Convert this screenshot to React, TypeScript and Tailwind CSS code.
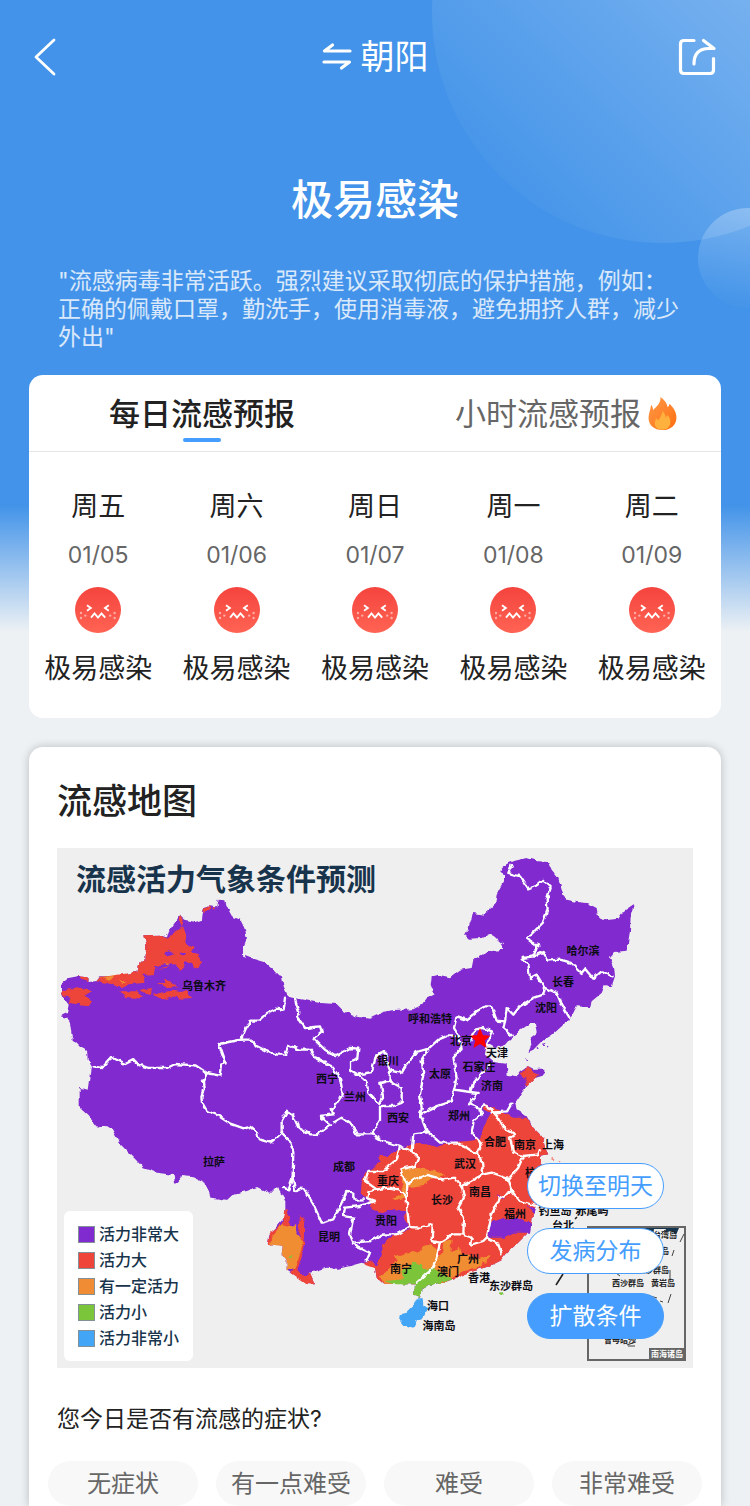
import { useState } from "react";

const days = [
  { name: "周五", date: "01/05", level: "极易感染" },
  { name: "周六", date: "01/06", level: "极易感染" },
  { name: "周日", date: "01/07", level: "极易感染" },
  { name: "周一", date: "01/08", level: "极易感染" },
  { name: "周二", date: "01/09", level: "极易感染" },
];

const symptoms = ["无症状", "有一点难受", "难受", "非常难受"];

const legend = [
  { label: "活力非常大", swatch: "bg-[#802bcf]" },
  { label: "活力大", swatch: "bg-[#ee443a]" },
  { label: "有一定活力", swatch: "bg-[#f08c33]" },
  { label: "活力小", swatch: "bg-[#7bc53b]" },
  { label: "活力非常小", swatch: "bg-[#42a5f5]" },
];

const cities: [string, number, number][] = [
  ["哈尔滨", 526, 103],
  ["长春", 506, 134],
  ["沈阳", 489, 160],
  ["乌鲁木齐", 147, 138],
  ["呼和浩特", 373, 171],
  ["北京", 404, 193],
  ["天津", 440, 205],
  ["银川", 331, 213],
  ["石家庄", 422, 219],
  ["太原", 383, 226],
  ["西宁", 270, 231],
  ["济南", 435, 238],
  ["兰州", 298, 249],
  ["西安", 341, 270],
  ["郑州", 402, 268],
  ["合肥", 438, 294],
  ["南京", 468, 297],
  ["上海", 496, 297],
  ["拉萨", 157, 314],
  ["成都", 287, 319],
  ["武汉", 408, 316],
  ["杭州", 479, 325],
  ["重庆", 331, 333],
  ["长沙", 385, 352],
  ["南昌", 423, 344],
  ["福州", 458, 366],
  ["贵阳", 329, 373],
  ["昆明", 272, 389],
  ["广州", 411, 411],
  ["南宁", 344, 421],
  ["澳门", 391, 424],
  ["香港", 422, 430],
  ["东沙群岛", 454, 438],
  ["海口", 381, 458],
  ["海南岛", 382, 478],
  ["钓鱼岛", 498, 363],
  ["赤尾屿", 535, 363],
  ["台北", 506, 378],
];

const islands: [string, number, number][] = [
  ["台湾岛", 608, 387],
  ["澎湖岛", 600, 403],
  ["东沙群岛", 596, 422],
  ["西沙群岛", 571, 435],
  ["黄岩岛", 606, 435],
  ["曾母暗沙", 563, 492],
];

const land =
  "M12 408 35 390 62 385 92 388 92 402 118 400 130 385 170 385 205 378 238 372 245 345 265 335 268 290 262 262 308 260 330 268 335 250 360 215 368 200 385 215 415 222 435 215 440 180 455 175 478 178 482 155 505 157 510 178 525 205 550 215 562 240 570 270 558 300 558 322 580 330 620 342 645 362 664 382 675 385 680 415 694 447 739 455 789 465 839 468 859 488 894 505 937 512 979 492 1009 486 1069 484 1094 470 1114 445 1131 435 1121 410 1124 385 1144 380 1179 388 1209 365 1244 360 1249 335 1279 318 1300 310 1339 305 1337 288 1314 268 1297 258 1274 270 1236 272 1224 262 1234 240 1249 195 1279 200 1289 192 1314 170 1319 140 1341 100 1341 78 1326 70 1349 48 1374 38 1409 30 1444 40 1474 42 1484 65 1504 90 1514 125 1527 155 1559 162 1589 165 1619 180 1624 210 1644 217 1684 212 1699 190 1731 168 1721 200 1719 250 1709 308 1674 312 1659 330 1671 355 1674 385 1664 415 1644 412 1634 435 1604 460 1599 478 1559 475 1544 505 1509 540 1484 562 1454 580 1429 605 1414 612 1424 590 1417 572 1439 555 1434 525 1419 525 1389 545 1379 560 1359 572 1344 590 1314 600 1289 585 1284 620 1309 642 1349 648 1352 680 1379 685 1389 672 1414 655 1429 662 1462 662 1462 682 1434 690 1409 715 1394 735 1374 765 1379 784 1409 805 1429 839 1459 869 1464 899 1474 919 1449 924 1449 944 1464 960 1470 1000 1450 1050 1429 1089 1424 1129 1409 1159 1379 1189 1349 1214 1329 1239 1299 1254 1249 1269 1219 1274 1199 1289 1159 1304 1114 1311 1094 1324 1089 1349 1071 1344 1074 1309 1039 1309 1009 1304 979 1307 959 1289 954 1259 929 1249 914 1244 879 1254 844 1262 809 1259 759 1274 774 1309 754 1309 729 1294 689 1267 689 1239 674 1219 677 1194 649 1189 632 1191 637 1159 655 1140 685 1105 685 1060 660 1017 640 1037 600 1017 570 1029 530 1037 510 1056 462 1049 445 1004 410 988 375 984 355 1011 350 981 300 974 260 961 235 934 210 909 190 889 165 844 145 831 122 839 95 804 68 779 68 720 95 725 100 690 105 657 92 635 90 605 70 595 45 570 40 530 30 510 10 505 30 495 35 470 20 450 12 430Z";

const redAreas = [
  "M262 262 308 260 330 270 350 255 375 235 365 215 368 200 380 215 375 235 388 260 385 285 410 300 400 310 430 325 435 345 420 365 405 345 385 340 380 360 370 368 355 345 330 360 295 362 290 378 260 380 262 405 220 408 195 420 150 405 118 400 130 387 238 373 245 345 265 335 268 290Z",
  "M12 430 60 418 85 422 105 430 85 440 103 462 98 472 60 468 35 465 40 450 20 445Z",
  "M62 385 92 388 90 402 75 395ZM190 430 240 430 260 445 235 452 205 450ZM250 425 285 420 282 440 265 438Z",
  "M300 405 325 405 322 392 345 405 362 418 330 420ZM290 440 320 432 345 428 375 432 390 425 405 450 365 452 360 440 335 452 310 450ZM440 182 455 175 462 182 440 195ZM470 178 478 180 470 186Z",
  "M1014 909 1039 899 1069 887 1109 889 1139 897 1169 887 1199 881 1239 879 1269 874 1279 839 1289 820 1304 794 1280 785 1284 769 1319 784 1369 809 1409 809 1429 839 1459 869 1464 899 1474 919 1449 924 1449 944 1464 960 1470 1000 1450 1050 1429 1089 1424 1129 1409 1159 1379 1189 1349 1214 1329 1239 1299 1254 1249 1269 1199 1289 1159 1304 1074 1309 979 1307 959 1289 954 1259 969 1229 979 1189 999 1169 1059 1144 1044 1129 999 1104 944 1084 939 1054 911 1039 914 1004 924 974 949 959 969 939 964 924 994 925Z",
  "M639 1154 674 1129 687 1084 697 1109 699 1134 675 1150 640 1192 632 1191ZM729 1104 744 1119 744 1169 734 1229 724 1269 739 1284 759 1274 774 1309 749 1309 700 1275 715 1255 719 1219 734 1179 724 1144ZM920 1244 950 1240 960 1262 930 1252Z",
  "M1387 680 1414 655 1429 672 1447 680 1429 695 1411 715 1404 690Z",
];

const purpleHoles =
  "M320 318 335 305 350 320 335 325ZM365 312 385 318 378 326ZM290 355 350 345 352 352 300 362ZM1299 1124 1329 1114 1379 1109 1399 1119 1424 1124 1419 1154 1369 1154 1339 1169 1294 1169ZM1319 1039 1344 1049 1329 1054ZM1409 1074 1434 1080 1430 1095ZM955 1105 1000 1085 1050 1090 1040 1105 1055 1140 990 1130Z";

const orangeAreas =
  "M118 388 175 383 160 395 140 388ZM185 393 205 405 195 405ZM322 346 340 348 330 351ZM1029 964 1069 959 1109 964 1169 979 1119 994 1099 1014 1054 1021 1044 1049 1014 1056 1004 1049 1039 1039 1034 989ZM984 1274 1019 1239 1010 1225 1034 1219 1069 1209 1085 1215 1099 1194 1119 1189 1139 1204 1144 1229 1155 1215 1160 1179 1184 1175 1180 1209 1209 1199 1215 1220 1239 1224 1279 1239 1269 1259 1219 1269 1159 1304 979 1307 969 1284ZM649 1159 674 1129 699 1134 714 1129 719 1154 739 1179 729 1219 714 1264 689 1267 689 1239 674 1219 677 1194 639 1189ZM1270 1228 1300 1220 1290 1245 1270 1240Z";

const greenAreas =
  "M984 1299 1039 1294 1034 1269 1069 1244 1094 1249 1099 1264 1129 1259 1169 1284 1189 1294 1139 1307 1114 1311 1094 1324 1089 1349 1071 1344 1074 1309 1009 1309ZM697 1225 706 1225 704 1230Z";

const hainan = "M1079 1351 1097 1351 1099 1371 1114 1381 1094 1414 1079 1419 1069 1439 1039 1431 1029 1419 1031 1399 1049 1394 1069 1374Z";

const borders = [
  "M110 655 132 660 162 627 205 648 230 635 245 650 275 660 330 660 355 648 415 652 450 675 488 683 492 650 506 645 490 600 485 588 552 575 565 545 580 518 605 518 630 495 655 482 680 485 684 452",
  "M450 675 438 700 440 720 433 745 435 764 450 789 480 801 520 827 560 841 580 837 600 854 605 874 640 884 659 869 674 854",
  "M552 575 580 575 600 595 640 615 664 620 684 620 694 592 729 605 759 605 779 632 824 655 849 690 857 740 839 765 824 785 829 799 789 804 819 829 779 859 759 859 724 839 709 804 689 791 674 819 674 854 699 879 709 909 707 989 694 1024 678 1020",
  "M714 455 727 495 720 505 744 540 789 535 794 550 769 572 804 605 834 625 879 600 904 602 901 630 879 640 879 665 904 680 929 700 934 735 964 768 978 750 974 720 970 705 997 698 999 668",
  "M904 680 944 672 957 625 984 607 989 640 999 668 1034 675 1049 650 1079 612 1114 602 1144 575 1174 562 1204 562 1191 540 1199 505 1229 515 1259 490 1284 475 1304 475 1319 518 1344 520 1349 480 1369 500 1389 475 1429 450 1459 440 1464 420 1439 380 1419 390 1414 350 1397 330 1429 325 1441 295 1409 272 1457 225 1472 185 1469 155 1481 120 1457 98 1439 112 1414 122 1389 85 1354 75 1364 52",
  "M1429 325 1457 312 1474 338 1509 335 1544 345 1574 375 1584 362 1609 392 1634 370 1667 385",
  "M1435 300 1445 285 1447 295M1464 420 1499 435 1514 470 1537 508M1344 520 1339 540 1364 562",
  "M1114 602 1094 635 1099 680 1089 740 1094 780 1089 799 1109 849 1149 884 1199 884 1229 899 1259 919",
  "M1204 562 1214 600 1189 630 1199 690 1191 725 1184 760 1139 775 1094 797",
  "M1191 725 1239 732 1249 705 1279 670 1299 650M1239 732 1262 735 1236 769 1269 780 1275 799 1250 820 1244 854 1274 889 1259 919 1274 934 1279 979",
  "M997 698 1034 720 1034 765 1009 774 969 774 969 819 944 859 899 859 884 829 854 809 829 824",
  "M944 859 979 879 1029 894 1064 909 1069 859 1109 854",
  "M1029 894 1019 934 979 969 934 969 924 999 959 1024 994 1019 1024 1024 1049 1049 1051 1009 1029 964 1074 954 1084 929 1064 909",
  "M1051 1009 1079 991 1109 981 1159 994 1194 989 1214 1014 1279 979 1304 974 1349 989 1364 1029 1329 1049 1304 1099 1289 1169 1324 1189 1334 1219",
  "M1214 1014 1221 1049 1204 1079 1221 1109 1219 1159 1189 1159 1149 1184 1124 1179 1127 1129 1089 1139 1057 1137 1051 1089 1049 1049",
  "M1219 1159 1244 1169 1239 1191 1279 1179 1289 1169M1149 1184 1139 1229 1124 1264 1079 1304",
  "M1057 1137 1019 1159 979 1159 939 1179 889 1184 879 1160 889 1109 859 1104 864 1079 909 1074 954 1059 930 1050 935 1030 959 1024",
  "M707 989 715 1030 739 1019 769 1069 794 1124 829 1114 854 1064 869 1029 889 1034 889 1055 920 1054M884 1189 939 1214 929 1239",
  "M1275 799 1268 785 1280 772 1300 780 1319 804 1339 839 1374 859 1359 869 1369 914 1399 924 1444 919 1449 904M1399 924 1384 959 1354 994M1364 1029 1389 1059 1439 1074M1304 794 1350 790 1364 767M1240 575 1255 545 1275 540 1305 550 1290 590",
];

const specks: [number, number][] = [
  [1508, 943], [1486, 930], [1496, 958], [1510, 970], [1462, 588], [1474, 596], [1408, 636], [1442, 600], [1430, 1170], [1456, 574], [1405, 690],
];

function FluMap() {
  return (
    <svg viewBox="0 0 636 520" className="block w-full" role="img" aria-label="流感活力气象条件预测">
      <defs>
        <filter id="rough" x="0" y="0" width="1" height="1">
          <feTurbulence type="fractalNoise" baseFrequency="0.2" numOctaves="1" seed="4" />
          <feDisplacementMap in="SourceGraphic" scale="5" xChannelSelector="R" yChannelSelector="G" />
        </filter>
      </defs>
      <rect width="636" height="520" fill="#efefef" />
      <g filter="url(#rough)">
        <rect width="636" height="520" fill="#efefef" />
        <g transform="scale(0.33333)">
          <path d={land} fill="#802bcf" />
          <g fill="#ee443a">
            {redAreas.map((d) => (
              <path key={d} d={d} />
            ))}
          </g>
          <path d={purpleHoles} fill="#802bcf" />
          <path d={orangeAreas} fill="#f08c33" />
          <path d={greenAreas} fill="#7bc53b" />
          <path d={hainan} fill="#42a5f5" />
          {specks.map(([x, y]) => (
            <circle key={`${x}-${y}`} cx={x} cy={y} r="3" fill={y < 800 ? "#802bcf" : "#f0877f"} />
          ))}
          <circle cx="1333" cy="1337" r="4" fill="#7bc53b" />
        </g>
      </g>
      <g filter="url(#rough)">
        <rect width="636" height="520" fill="none" />
        <g transform="scale(0.33333)" fill="none" stroke="#fff" strokeWidth="7" strokeLinejoin="round" strokeLinecap="round">
          <path d="M0 0H1908V1560H0Z" strokeOpacity="0" />
          {borders.map((d) => (
            <path key={d} d={d} />
          ))}
        </g>
      </g>
      <path d="M499 437 506 426M518 371l2-2M521 365l2-3" stroke="#222" strokeWidth="1.6" fill="none" />
      <path d="M423 182l2.4 5.8 6.200.5-4.700 4 1.500 6.100-5.400-3.300-5.400 3.300 1.500-6.100-4.700-4 6.200-.5z" fill="#f00" stroke="#f00" strokeWidth="1.5" />
      <g>
        <rect x="531" y="379" width="97" height="133" fill="#efefef" stroke="#666" strokeWidth="2" />
        <path d="M532 380h90l-3 7-4-4-8 1-14 6-20 2-41-9z" fill="#16364f" />
        <path d="M597 381h12l-4 8-9 1z" fill="#efefef" />
        <path d="M540 390l15 32 8 6M580 422l7-5 2-8M590 447l10 3M604 386l4-4M627 386l-4 8M617 402l-2 6M613 422v10M614 446l-3 9M603 453l3 1M570 497l9-3M571 498h7" stroke="#444" fill="none" />
        <g fontSize="8" fontWeight="700" fill="#222" textAnchor="middle">
          {islands.map(([name, x, y]) => (
            <text key={name} x={x} y={y + 3}>
              {name}
            </text>
          ))}
        </g>
        <rect x="592" y="500" width="36" height="12" fill="#666" />
        <text x="610" y="509" fontSize="8" fontWeight="700" fill="#fff" textAnchor="middle">
          南海诸岛
        </text>
      </g>
      <g fontSize="11" fontWeight="700" fill="#0b0b12" textAnchor="middle">
        {cities.map(([name, x, y]) => (
          <text key={name} x={x} y={y + 4}>
            {name}
          </text>
        ))}
      </g>
      <text x="19" y="42" fontSize="30" fontWeight="700" fill="#17344c">
        流感活力气象条件预测
      </text>
    </svg>
  );
}

function SickFace() {
  return (
    <svg viewBox="0 0 46 46" className="size-[46px]" aria-hidden="true">
      <defs>
        <linearGradient id="face" x1="0" y1="0" x2="0" y2="1">
          <stop offset="0" stopColor="#f4443e" />
          <stop offset="1" stopColor="#ff6353" />
        </linearGradient>
      </defs>
      <circle cx="23" cy="23" r="23" fill="url(#face)" />
      <g fill="none" stroke="#fff" strokeWidth="1.9">
        <path d="M12 18.300 15.800 21 12 23.700M33.800 18.300 30 21 33.800 23.700" />
        <path d="M16 30.600 19.500 26.400 23 30.600 26.500 26.400 30.200 30.600" />
      </g>
      <g fill="#fff" fillOpacity=".5">
        <circle cx="6" cy="26" r="1.200" />
        <circle cx="6" cy="31" r="1.200" />
        <circle cx="10.300" cy="28.600" r="1.200" />
        <circle cx="35.200" cy="28.600" r="1.200" />
        <circle cx="39.600" cy="26" r="1.200" />
        <circle cx="39.600" cy="31" r="1.200" />
      </g>
    </svg>
  );
}

function Flame() {
  return (
    <svg viewBox="0 0 28 32" className="absolute left-full top-[6px] ml-[7px] h-[33px] w-[29px]" aria-hidden="true">
      <defs>
        <linearGradient id="flame" x1="0" y1="0" x2="1" y2="1">
          <stop offset="0" stopColor="#ff9a4a" />
          <stop offset="1" stopColor="#ff6f0f" />
        </linearGradient>
      </defs>
      <path
        d="M12 0c4 3 6.500 6 7 10 1-1 1.500-2.200 1.800-3.500C24.500 10 27.500 14.500 27.500 20c0 7-5.500 12-13.500 12S.5 27 .5 20.500C.5 17 1.800 14 3 7.500c1.200 1.800 1.800 3 2 5C8.500 9 12.500 6 12 0z"
        fill="url(#flame)"
      />
      <path d="M14 13.500c2 2 3 4 3 6.500l2-2.500c2 2.500 3 5 2.500 8-.6 4-3.500 6.200-7.500 6.200-4.500 0-7.500-2.500-7.500-6 0-2 .7-3.500 1.500-5l1.800 2C11.500 20 13.500 17.500 14 13.500z" fill="#ffb13d" />
    </svg>
  );
}

const modes = ["切换至明天", "发病分布", "扩散条件"];

export default function App() {
  const [tab, setTab] = useState(0);
  const [mode, setMode] = useState(2);
  const [symptom, setSymptom] = useState(-1);

  return (
    <div
      lang="zh-CN"
      className="relative min-h-screen overflow-hidden bg-[#edf1f4] bg-[linear-gradient(#4293e9_0,#4293e9_505px,#edf1f4_632px)] font-['Inter','Noto_Sans_CJK_SC',sans-serif] text-[#222]"
    >
      <div className="absolute -top-[218px] -right-[143px] size-[461px] rounded-full bg-[linear-gradient(225deg,rgba(255,255,255,0.4)_15%,rgba(255,255,255,0.03)_85%)]" />
      <div className="absolute top-[208px] -right-[48px] size-[100px] rounded-full bg-[linear-gradient(190deg,rgba(255,255,255,0.3),rgba(255,255,255,0.02)_90%)]" />

      <div className="relative">
        <header className="flex h-[114px] items-center justify-between px-[32px] text-white">
          <button type="button" aria-label="返回" className="w-[40px]">
            <svg viewBox="0 0 26 40" className="h-[40px] w-[26px]" fill="none" stroke="currentColor" strokeWidth="2.8" strokeLinecap="round" strokeLinejoin="round">
              <path d="M22 3 4 20 22 37" />
            </svg>
          </button>
          <button type="button" className="flex items-center gap-[9px] text-[34px] leading-[48px]">
            <svg viewBox="0 0 30 30" className="size-[30px]" fill="none" stroke="currentColor" strokeWidth="3.200" strokeLinecap="round" strokeLinejoin="round">
              <path d="M28 9H2.500L10.500 3M2 20H27.500L19.500 26" />
            </svg>
            朝阳
          </button>
          <button type="button" aria-label="分享" className="flex w-[40px] justify-end">
            <svg viewBox="0 0 40 40" className="size-[40px]" fill="none" stroke="currentColor" strokeWidth="3.200" strokeLinecap="round" strokeLinejoin="round">
              <path d="M16 3.500H6Q2.500 3.500 2.500 7V33Q2.500 36.500 6 36.500H32Q35.500 36.500 35.500 33V21.500M25.500 3.500 36 11.500H31C21 11.500 16 17 16 27" />
            </svg>
          </button>
        </header>

        <section className="px-[58px] pt-[56px] text-white">
          <h1 className="text-center text-[42px] leading-[60px] font-medium">极易感染</h1>
          <p className="mt-[37px] text-[23px] leading-[28px] whitespace-nowrap text-white/80">
            "流感病毒非常活跃。强烈建议采取彻底的保护措施，例如：
            <br />
            正确的佩戴口罩，勤洗手，使用消毒液，避免拥挤人群，减少
            <br />
            外出"
          </p>
        </section>

        <main className="mt-[24px] flex flex-col gap-[29px] px-[29px]">
          <section className="rounded-[14px] bg-white">
            <div role="tablist" className="grid h-[77px] grid-cols-2 border-b border-[#e6e6e6] text-[31px] leading-[46px]">
              {["每日流感预报", "小时流感预报"].map((label, i) => (
                <button key={label} type="button" role="tab" aria-selected={tab === i} onClick={() => setTab(i)} className="flex flex-col items-center pt-[16px]">
                  <span className={tab === i ? "relative font-medium text-[#222]" : "relative text-[#666]"}>
                    {label}
                    {i === 1 && <Flame />}
                  </span>
                  {tab === i && <span className="mt-px h-[4px] w-[38px] rounded-full bg-[#459dff]" />}
                </button>
              ))}
            </div>
            <ul className="grid h-[266px] grid-cols-5">
              {days.map((day) => (
                <li key={day.date} className="flex flex-col items-center whitespace-nowrap">
                  <span className="mt-[35px] text-[27px] leading-[40px]">{day.name}</span>
                  <span className="mt-[14px] text-[23px] leading-[28px] text-[#666]">{day.date}</span>
                  <span className="mt-[18px]">
                    <SickFace />
                  </span>
                  <span className="mt-[16px] text-[27px] leading-[40px]">{day.level}</span>
                </li>
              ))}
            </ul>
          </section>

          <section className="rounded-t-[14px] bg-white shadow-[0_0_10px_rgba(0,0,0,0.22)]">
            <div className="px-[28px] pt-[29px]">
              <h2 className="text-[35px] leading-[50px] font-medium">流感地图</h2>
              <div className="relative mt-[22px] bg-[#efefef]">
                <FluMap />
                <ul className="absolute bottom-[7px] left-[7px] flex flex-col gap-[2px] rounded-[6px] bg-white px-[14px] py-[11px] text-[16px] leading-[24px] font-medium text-[#17344c]">
                  {legend.map((item) => (
                    <li key={item.label} className="flex items-center gap-[4px]">
                      <span className={`size-[17px] border border-[#849098] ${item.swatch}`} />
                      {item.label}
                    </li>
                  ))}
                </ul>
                <div className="absolute top-[315px] right-[29px] flex w-[137px] flex-col gap-[19px]">
                  {modes.map((label, i) => (
                    <button
                      key={label}
                      type="button"
                      aria-pressed={mode === i}
                      onClick={() => setMode(i)}
                      className={`h-[46px] rounded-full border border-[#459dff] text-[23px] ${mode === i ? "bg-[#459dff] text-white" : "bg-white text-[#459dff]"}`}
                    >
                      {label}
                    </button>
                  ))}
                </div>
              </div>
              <h3 className="mt-[33px] text-[23px] leading-[36px]">您今日是否有流感的症状?</h3>
            </div>
            <div className="mt-[24px] grid grid-cols-4 gap-[18px] px-[19px]">
              {symptoms.map((label, i) => (
                <button
                  key={label}
                  type="button"
                  aria-pressed={symptom === i}
                  onClick={() => setSymptom(i)}
                  className={`h-[45px] rounded-full text-[24px] whitespace-nowrap ${symptom === i ? "bg-[#459dff] text-white" : "bg-[#f8f8f8] text-[#666]"}`}
                >
                  {label}
                </button>
              ))}
            </div>
          </section>
        </main>
      </div>
    </div>
  );
}
